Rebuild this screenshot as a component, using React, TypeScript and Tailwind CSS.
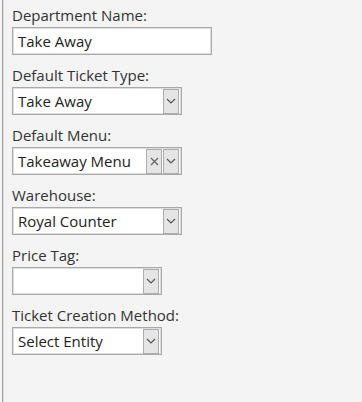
import { ReactNode } from 'react';

function Chevron() {
  return (
    <svg width="10" height="6" viewBox="0 0 10 6" fill="none" stroke="#555" strokeWidth="1.2">
      <path d="M1 1l4 4 4-4" />
    </svg>
  );
}

function Cross() {
  return (
    <svg width="9" height="9" viewBox="0 0 9 9" fill="none" stroke="#666" strokeWidth="1.3">
      <path d="M1 1l7 7M8 1l-7 7" />
    </svg>
  );
}

function Btn({ children }: { children: ReactNode }) {
  return (
    <div className="w-[16px] h-[25px] bg-[#e5e5e5] border border-[#adadad] flex items-center justify-center">
      {children}
    </div>
  );
}

function Field({ label, children }: { label: string; children: ReactNode }) {
  return (
    <div className="flex flex-col">
      <div className="h-[21px] leading-[19px] text-[15px] text-[#333]">{label}</div>
      {children}
    </div>
  );
}

function Combo({ value, width, clear }: { value: string; width: string; clear?: boolean }) {
  return (
    <div className={`${width} h-[28px] bg-white border border-[#a9a9a9] shadow-[inset_0_0_0_1px_#dedede] flex items-center pl-[5px] pr-[2px]`}>
      <span className="flex-1 text-[15px] text-[#222] truncate">{value}</span>
      <div className="flex gap-[1px]">
        {clear && (
          <Btn>
            <Cross />
          </Btn>
        )}
        <Btn>
          <Chevron />
        </Btn>
      </div>
    </div>
  );
}

export default function App() {
  return (
    <div
      className="w-[362px] h-[402px] bg-[#f4f4f4] flex"
      style={{ fontFamily: '"Open Sans", "Noto Sans", sans-serif' }}
    >
      <div className="w-[2px] shrink-0" />
      <div className="w-[1px] bg-[#a6a6a6] shrink-0" />
      <div className="w-[1px] bg-[#dcdcdc] shrink-0" />
      <div className="flex flex-col gap-[11px] pl-[8px] pt-[6px]">
        <Field label="Department Name:">
          <div className="w-[200px] h-[28px] bg-white border border-[#a9a9a9] shadow-[inset_0_0_0_1px_#dedede] flex items-center pl-[5px] text-[15px] text-[#222]">
            Take Away
          </div>
        </Field>
        <Field label="Default Ticket Type:">
          <Combo value="Take Away" width="w-[170px]" />
        </Field>
        <Field label="Default Menu:">
          <Combo value="Takeaway Menu" width="w-[170px]" clear />
        </Field>
        <Field label="Warehouse:">
          <Combo value="Royal Counter" width="w-[170px]" />
        </Field>
        <Field label="Price Tag:">
          <Combo value="" width="w-[150px]" />
        </Field>
        <Field label="Ticket Creation Method:">
          <Combo value="Select Entity" width="w-[150px]" />
        </Field>
      </div>
    </div>
  );
}
